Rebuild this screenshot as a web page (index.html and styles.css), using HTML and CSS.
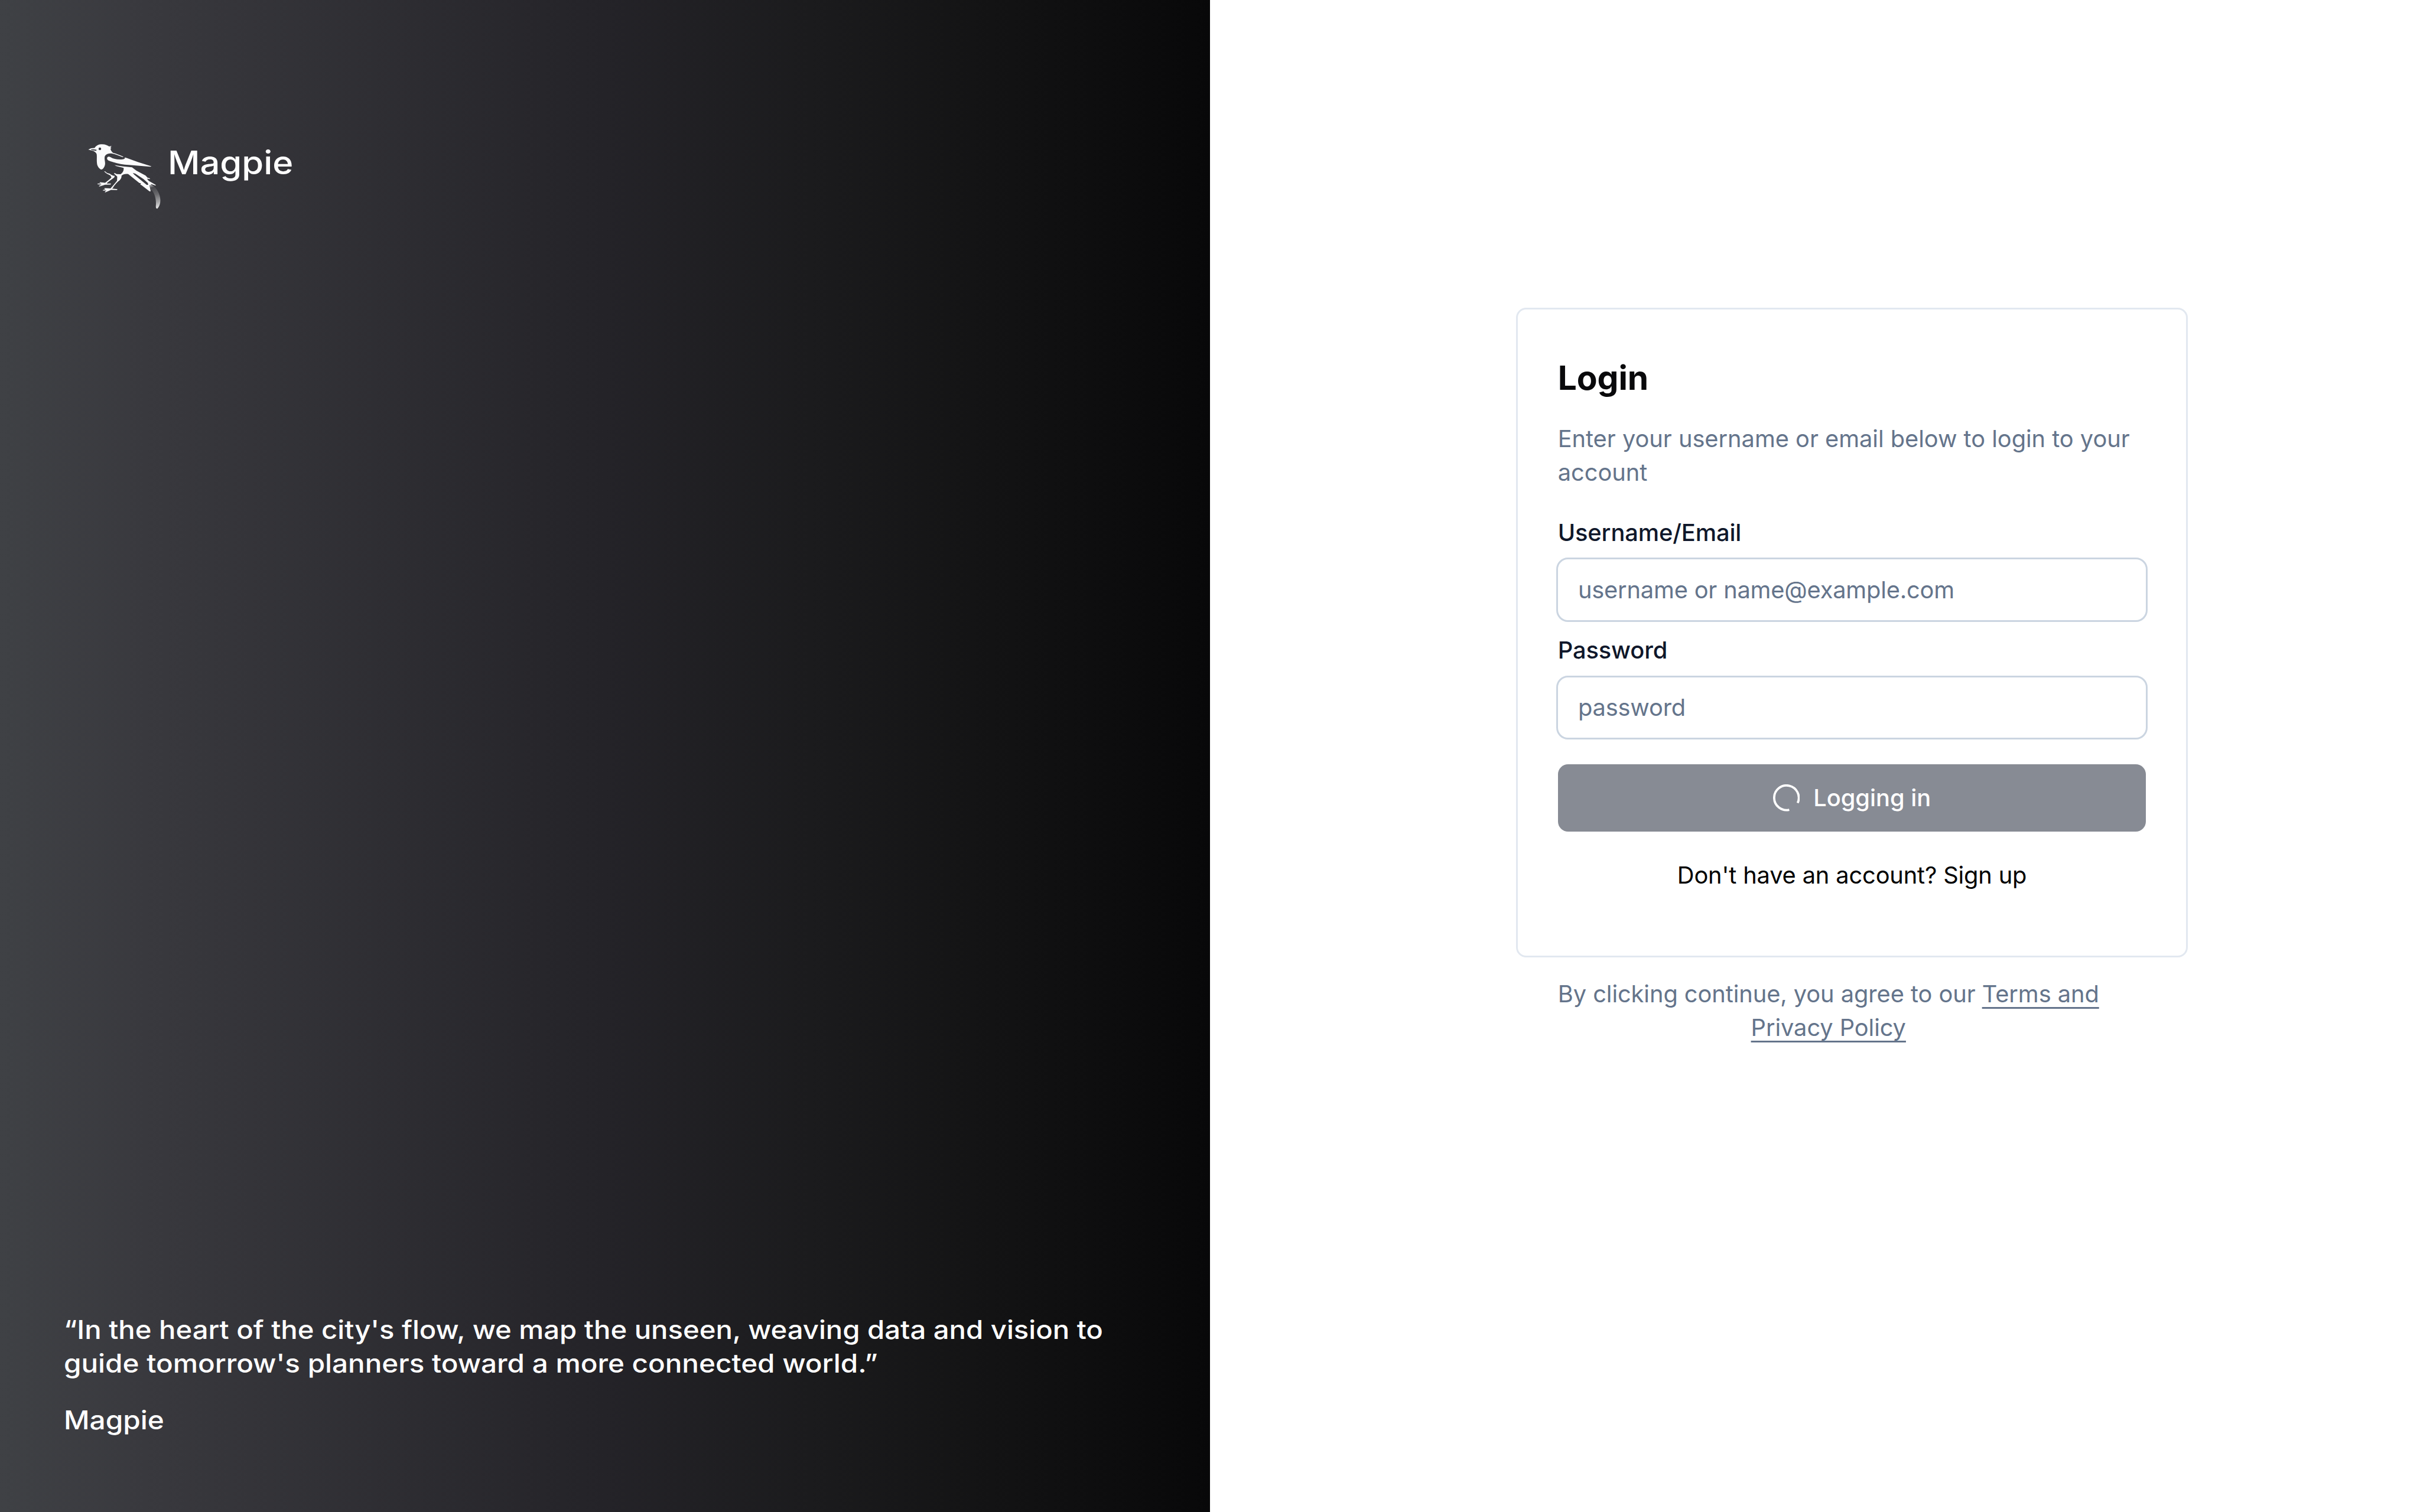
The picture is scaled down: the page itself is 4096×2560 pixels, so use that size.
FILE: index.html
```html
<!DOCTYPE html>
<html lang="en">
<head>
<meta charset="utf-8">
<title>Magpie</title>
<link rel="stylesheet" href="styles.css">
</head>
<body>
<main class="page">
  <section class="brand">
    <header class="brand-head">
      <svg class="bird" viewBox="0 0 480 420" aria-hidden="true">
        <defs>
          <linearGradient id="tail" x1="390" y1="265" x2="425" y2="395" gradientUnits="userSpaceOnUse">
            <stop offset="0" stop-color="#fff" stop-opacity=".75"/>
            <stop offset=".14" stop-color="#fff" stop-opacity=".08"/>
            <stop offset=".45" stop-color="#fff" stop-opacity=".25"/>
            <stop offset=".75" stop-color="#fff" stop-opacity=".55"/>
            <stop offset="1" stop-color="#fff" stop-opacity=".9"/>
          </linearGradient>
        </defs>
        <g fill="#fbfbfc">
          <path fill-rule="evenodd" d="M52 80 L67 73 L86 71 C94 57 108 51 126 51 C143 51 156 57 164 63 L177 60 L170 68 L176 70 L171 75 C172 83 176 90 184 97 C203 102 223 109 241 119 L236 120 C216 112 197 105 180 101 C164 98 149 103 142 113 C135 124 143 140 142 157 C140 172 133 183 122 187 C111 183 102 171 99 157 C96 140 99 120 97 105 C95 98 89 94 81 88 L66 84 Z M67 78 L68 82 L95 87 L96 81 L80 78 Z M107 76 a7 7 0 1 0 14 0 a7 7 0 1 0 -14 0 Z"/>
          <path d="M153 124 C155 117 165 116 172 121 C190 132 216 135 241 131 L248 127 L247 122 L258 125 L319 147 L391 170 L384 172 L270 162 C239 162 211 155 185 147 C164 141 150 137 153 124 Z"/>
          <path fill-rule="evenodd" d="M192 163 C224 169 252 172 286 175 L310 193 L359 219 L369 230 L382 234 L382 238 L366 236 L375 247 L413 269 L413 273 L391 266 L380 271 L386 304 L380 304 L336 270 L331 268 L334 261 L325 259 L266 211 C251 209 238 211 230 220 C231 231 225 242 212 251 C200 262 191 273 183 286 L178 289 L208 292 L206 297 L174 296 L143 309 L140 307 L149 299 L130 300 L131 297 L144 293 L137 289 L140 286 L171 288 C184 275 195 260 206 247 L207 225 L190 209 L192 205 L204 211 L225 212 C236 204 244 192 241 178 C225 174 205 171 192 163 Z M290 205 L299 215 L365 269 L373 269 L371 259 L348 238 L304 209 Z"/>
          <path d="M137 197 L142 196 C148 203 156 207 167 209 C174 216 183 220 194 221 L191 229 C180 237 168 246 154 257 L151 262 L174 262 L171 267 L142 268 L112 278 L108 275 L123 267 L101 266 L103 262 L123 262 L112 258 L115 255 L142 258 C153 249 166 240 176 229 L171 219 C160 213 148 209 137 197 Z"/>
        </g>
        <path fill="url(#tail)" d="M382 266 L398 273 C421 289 439 323 438 354 C438 370 432 385 422 396 C415 397 413 390 414 380 C416 351 411 322 392 297 L384 302 Z"/>
      </svg>
      <span class="wordmark">Magpie</span>
    </header>
    <blockquote class="quote">
      <p class="quote-line">“In the heart of the city's flow, we map the unseen, weaving data and vision to</p>
      <p class="quote-line second">guide tomorrow's planners toward a more connected world.”</p>
      <footer class="quote-by">Magpie</footer>
    </blockquote>
  </section>
  <section class="auth">
    <form class="card">
      <h1 class="title">Login</h1>
      <p class="desc">Enter your username or email below to login to your account</p>
      <label class="label" for="user">Username/Email</label>
      <input class="field" id="user" type="text" placeholder="username or name@example.com">
      <label class="label" for="pass">Password</label>
      <input class="field" id="pass" type="password" placeholder="password">
      <button class="submit" type="button">
        <svg class="spinner" viewBox="0 0 48 48" aria-hidden="true"><path d="M43.9 33.3 A22 22 0 1 0 28.9 45.4" fill="none" stroke="#fff" stroke-width="4"/></svg>
        <span>Logging in</span>
      </button>
      <p class="signup">Don't have an account? Sign up</p>
    </form>
    <p class="terms">By clicking continue, you agree to our <a class="link">Terms and<br>Privacy Policy</a></p>
  </section>
</main>
</body>
</html>
```
FILE: styles.css
```css
/* 1rem = 10 layout units */
html { font-size: 28.4444px; }
* { box-sizing: border-box; margin: 0; }
body { background: #fff; font-family: Inter, "Liberation Sans", sans-serif; }
.page { display: grid; grid-template-columns: 1fr 1fr; width: 100vw; height: 100vh; overflow: hidden; }

.brand {
  display: flex; flex-direction: column; justify-content: space-between;
  padding: 8rem 3.8rem 4.42rem;
  color: #fff;
  background: linear-gradient(90deg, #3f4145 0%, #39393e 12%, #242328 50%, #1b1b1d 67%, #131314 82%, #080809 100%);
}
.brand-head { display: flex; align-items: flex-start; padding-left: .867rem; }
.bird { width: 5.333rem; height: 4.667rem; }
.wordmark {
  font-size: 1.925rem; font-weight: 500; line-height: 2.8rem;
  margin: .3rem 0 0 -.02rem; transform: scaleX(1.09); transform-origin: left;
}
.quote { font-size: 1.54rem; font-weight: 500; line-height: 2rem; }
.quote-line { white-space: nowrap; width: max-content; transform: scaleX(1.078); transform-origin: left; }
.second { transform: scaleX(1.0865); }
.quote-by { margin-top: 1.4rem; width: max-content; transform: scaleX(1.09); transform-origin: left; }

.auth { display: flex; flex-direction: column; padding: 18.3rem 0 0 18.2rem; }
.card {
  display: flex; flex-direction: column;
  width: 40rem; height: 38.7rem; padding: 2.68rem 2.39rem 0;
  border: 3px solid #e2e8f0; border-radius: .6rem;
}
.title { font-size: 2rem; font-weight: 700; line-height: 2.8rem; letter-spacing: -.001em; color: #09090b; }
.desc { font-size: 1.4rem; line-height: 2rem; letter-spacing: -.001em; color: #64748b; margin-top: 1.24rem; }
.label { font-size: 1.4rem; font-weight: 500; line-height: 2rem; letter-spacing: -.003em; color: #0f172a; margin: 1.6rem 0 .48rem; }
.field {
  height: 3.8rem; margin: 0 -.1rem; padding: 0 1.2rem;
  border: 3px solid #cbd5e1; border-radius: .7rem; background: #fff; outline: 0;
  font: 400 1.4rem/2rem Inter, sans-serif; letter-spacing: -.005em; color: #0f172a;
}
.field::placeholder { color: #64748b; opacity: 1; }
.field + .label { margin-top: .72rem; }
.submit {
  display: flex; align-items: center; justify-content: center; gap: .8rem;
  height: 4rem; margin-top: 1.5rem; border: 0; border-radius: .6rem;
  background: #878b94; color: #fff; font: 500 1.4rem/2rem Inter, sans-serif;
}
.spinner { width: 1.6rem; height: 1.6rem; }
.signup { margin-top: 1.6rem; font-size: 1.4rem; line-height: 2rem; letter-spacing: -.004em; text-align: center; color: #000; }
.terms { width: 37.2rem; margin-top: 1.2rem; font-size: 1.4rem; line-height: 2rem; letter-spacing: -.002em; text-align: center; color: #64748b; }
.link { text-decoration: underline; text-underline-offset: .28rem; text-decoration-thickness: 3px; text-decoration-skip-ink: none; }
```
